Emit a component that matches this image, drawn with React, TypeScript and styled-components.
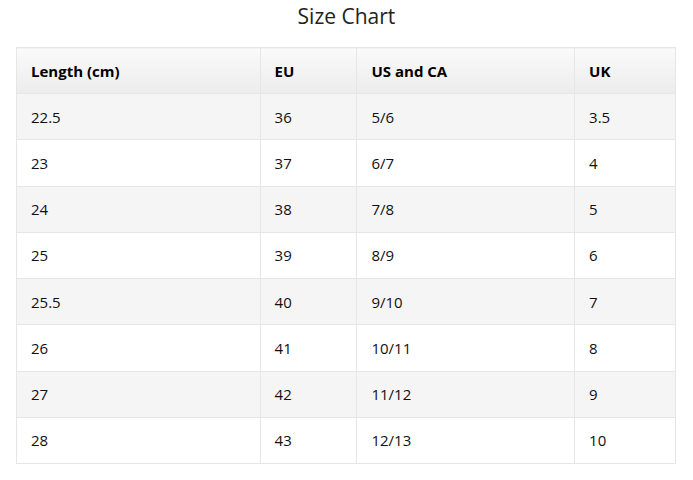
import React from "react";
import styled, { createGlobalStyle } from "styled-components";

const Global = createGlobalStyle`
  html, body { margin: 0; padding: 0; background: #fff; }
  body { font-family: "Open Sans", "Noto Sans", sans-serif; color: #111; }
`;

const Page = styled.div`
  padding: 3px 16px 16px 16px;
`;

const Title = styled.h2`
  margin: 0 0 18px 0;
  text-align: center;
  font-weight: 400;
  font-size: 21px;
  line-height: 26px;
  color: #222;
`;

const Table = styled.table`
  width: 660px;
  border-collapse: collapse;
  font-size: 15px;
`;

const HeadCell = styled.th<{ $w: number }>`
  width: ${(p) => p.$w}px;
  height: 46px;
  padding: 0 14px;
  text-align: left;
  font-weight: 700;
  color: #000;
  border: 1px solid #e6e6e6;
  background: linear-gradient(to bottom, #fafafa, #ececec);
  box-sizing: border-box;
`;

const Row = styled.tr<{ $alt: boolean }>`
  background: ${(p) => (p.$alt ? "#f5f5f5" : "#ffffff")};
`;

const Cell = styled.td`
  height: 46.25px;
  padding: 0 14px;
  border: 1px solid #e6e6e6;
  color: #111;
  box-sizing: border-box;
`;

const rows = [
  ["22.5", "36", "5/6", "3.5"],
  ["23", "37", "6/7", "4"],
  ["24", "38", "7/8", "5"],
  ["25", "39", "8/9", "6"],
  ["25.5", "40", "9/10", "7"],
  ["26", "41", "10/11", "8"],
  ["27", "42", "11/12", "9"],
  ["28", "43", "12/13", "10"],
];

const headers: [string, number][] = [
  ["Length (cm)", 244],
  ["EU", 97],
  ["US and CA", 218],
  ["UK", 101],
];

export default function App() {
  return (
    <>
      <Global />
      <Page>
        <Title>Size Chart</Title>
        <Table>
          <thead>
            <tr>
              {headers.map(([h, w]) => (
                <HeadCell key={h} $w={w}>
                  {h}
                </HeadCell>
              ))}
            </tr>
          </thead>
          <tbody>
            {rows.map((r, i) => (
              <Row key={i} $alt={i % 2 === 0}>
                {r.map((c, j) => (
                  <Cell key={j}>{c}</Cell>
                ))}
              </Row>
            ))}
          </tbody>
        </Table>
      </Page>
    </>
  );
}
